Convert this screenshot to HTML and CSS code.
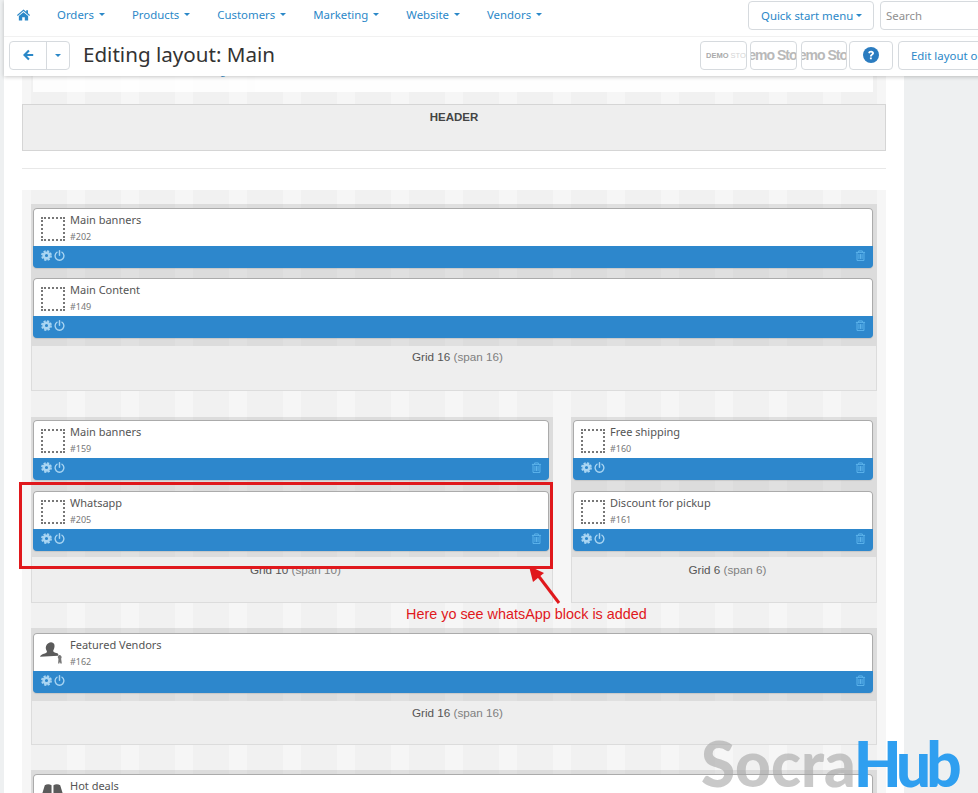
FILE: index.html
```html
<!DOCTYPE html>
<html lang="en">
<head>
<meta charset="utf-8">
<title>Editing layout: Main</title>
<link rel="stylesheet" href="styles.css">
</head>
<body>
<svg class="defs" width="0" height="0">
  <symbol id="i-gear" viewBox="0 0 12 12">
    <circle cx="6" cy="6" r="3.100" fill="none" stroke="currentColor" stroke-width="2.800"/>
    <circle cx="6" cy="6" r="5" fill="none" stroke="currentColor" stroke-width="1.800" stroke-dasharray="2.400 1.527"/>
  </symbol>
  <symbol id="i-power" viewBox="0 0 12 12">
    <path d="M3.300 2.400a4.800 4.800 0 1 0 5.400 0" fill="none" stroke="currentColor" stroke-width="1.500" stroke-linecap="round"/>
    <path d="M6 .8v5" fill="none" stroke="currentColor" stroke-width="1.600" stroke-linecap="round"/>
  </symbol>
  <symbol id="i-trash" viewBox="0 0 12 12">
    <path d="M1 2.600h10M4 2.400V1h4v1.400M2.200 2.800v8.600h7.600V2.800M4.300 4.400v5.400M6 4.400v5.400M7.700 4.400v5.400" fill="none" stroke="currentColor" stroke-width=".9"/>
  </symbol>
</svg>

<div class="page">
  <header class="topbar">
    <div class="toprow">
      <nav class="nav">
        <svg class="home" viewBox="0 0 14 12"><path d="M7 0 0 6l.8 1L7 1.800 13.200 7l.8-1-2.200-1.900V1h-1.900v1.500zM2 7.200V12h3.600V8.400h2.800V12H12V7.200L7 3z"/></svg>
        <a class="nav-item">Orders<i class="caret"></i></a>
        <a class="nav-item">Products<i class="caret"></i></a>
        <a class="nav-item">Customers<i class="caret"></i></a>
        <a class="nav-item">Marketing<i class="caret"></i></a>
        <a class="nav-item">Website<i class="caret"></i></a>
        <a class="nav-item">Vendors<i class="caret"></i></a>
      </nav>
      <a class="btn quick">Quick start menu<i class="caret"></i></a>
      <div class="search">Search</div>
    </div>
    <div class="titlerow">
      <div class="titleleft">
        <div class="backgroup">
          <a class="back"><svg viewBox="0 0 12 12"><path d="M6.200.8 1 6l5.200 5.200 1.500-1.500L5 7.100h6.200V4.900H5l2.700-2.600z"/></svg></a>
          <a class="backcaret"><i class="caret"></i></a>
        </div>
        <h1 class="title">Editing layout: Main</h1>
      </div>
      <div class="tools">
        <a class="tool tool-a"><b>DEMO</b>&nbsp;STORE</a>
        <a class="tool tool-b">Demo Store</a>
        <a class="tool tool-c">Demo Store</a>
        <a class="tool tool-help"><svg viewBox="0 0 16 16"><circle cx="8" cy="8" r="8"/><path class="qm" d="M5.200 6.100C5.400 4.500 6.500 3.700 8.100 3.700c1.700 0 2.900 1 2.900 2.400 0 1.100-.6 1.700-1.400 2.200-.6.4-.8.6-.8 1.200H7c0-1.200.4-1.700 1.100-2.200.6-.4.9-.7.9-1.100 0-.5-.4-.8-1-.8-.7 0-1 .3-1.100 1zM6.900 10.400h1.900v1.900H6.900z"/></svg></a>
        <a class="btn edit">Edit layout on site</a>
      </div>
    </div>
  </header>

  <main class="content">
    <section class="stripes topstrip">
      <div class="toppanel"><span class="peek">g</span></div>
    </section>
    <div class="header-box">HEADER</div>
    <hr class="rule">

    <section class="stripes layout">
      <div class="grid">
        <div class="block span16">
          <div class="widgets">
            <article class="card"><div class="card-head"><span class="dots"></span><div><div class="name">Main banners</div><div class="id">#202</div></div></div><div class="card-bar"><svg class="ic gear"><use href="#i-gear"/></svg><svg class="ic power"><use href="#i-power"/></svg><svg class="ic trash"><use href="#i-trash"/></svg></div></article>
            <article class="card"><div class="card-head"><span class="dots"></span><div><div class="name">Main Content</div><div class="id">#149</div></div></div><div class="card-bar"><svg class="ic gear"><use href="#i-gear"/></svg><svg class="ic power"><use href="#i-power"/></svg><svg class="ic trash"><use href="#i-trash"/></svg></div></article>
          </div>
          <div class="label">Grid 16 <span>(span 16)</span></div>
        </div>

        <div class="block span10">
          <div class="widgets">
            <article class="card"><div class="card-head"><span class="dots"></span><div><div class="name">Main banners</div><div class="id">#159</div></div></div><div class="card-bar"><svg class="ic gear"><use href="#i-gear"/></svg><svg class="ic power"><use href="#i-power"/></svg><svg class="ic trash"><use href="#i-trash"/></svg></div></article>
            <article class="card"><div class="card-head"><span class="dots"></span><div><div class="name">Whatsapp</div><div class="id">#205</div></div></div><div class="card-bar"><svg class="ic gear"><use href="#i-gear"/></svg><svg class="ic power"><use href="#i-power"/></svg><svg class="ic trash"><use href="#i-trash"/></svg></div></article>
          </div>
          <div class="label">Grid 10 <span>(span 10)</span></div>
        </div>

        <div class="block span6">
          <div class="widgets">
            <article class="card"><div class="card-head"><span class="dots"></span><div><div class="name">Free shipping</div><div class="id">#160</div></div></div><div class="card-bar"><svg class="ic gear"><use href="#i-gear"/></svg><svg class="ic power"><use href="#i-power"/></svg><svg class="ic trash"><use href="#i-trash"/></svg></div></article>
            <article class="card"><div class="card-head"><span class="dots"></span><div><div class="name">Discount for pickup</div><div class="id">#161</div></div></div><div class="card-bar"><svg class="ic gear"><use href="#i-gear"/></svg><svg class="ic power"><use href="#i-power"/></svg><svg class="ic trash"><use href="#i-trash"/></svg></div></article>
          </div>
          <div class="label">Grid 6 <span>(span 6)</span></div>
        </div>

        <div class="block span16 single">
          <div class="widgets">
            <article class="card"><div class="card-head"><svg class="blockicon" viewBox="0 0 26 24"><path d="M9 1.500c2.200-1.500 5.400-.8 6 2 .4 2-.2 4-1 5.500-.5 1-.3 1.800.8 2.300 1.500.6 3 .8 4.200 1.700v1.800L0 16c.4-1.500 2-2.500 4-3.200 1.500-.5 3-.8 3.200-1.800.2-.8-.6-1.600-1-2.800-.6-2.300 0-5.200 2.800-6.700z"/><path class="key" d="M20 14a2.500 2.500 0 0 1 2 4l.7 5h-1.500l-.5-2-.6 2h-1.300l.4-5a2.500 2.500 0 0 1 .8-4z"/></svg><div><div class="name">Featured Vendors</div><div class="id">#162</div></div></div><div class="card-bar"><svg class="ic gear"><use href="#i-gear"/></svg><svg class="ic power"><use href="#i-power"/></svg><svg class="ic trash"><use href="#i-trash"/></svg></div></article>
          </div>
          <div class="label">Grid 16 <span>(span 16)</span></div>
        </div>

        <div class="block span16 last">
          <div class="widgets">
            <article class="card"><div class="card-head"><svg class="blockicon" viewBox="0 0 26 24"><path d="M5 3c2-1.500 5-1.500 7 0v18c-2-1-6-1-10 0L0 19zM21 3c-2-1.500-5-1.500-7 0v18c2-1 6-1 10 0l2-2z"/></svg><div><div class="name">Hot deals</div><div class="id">#163</div></div></div></article>
          </div>
        </div>
      </div>
    </section>
  </main>

  <div class="mark-box"></div>
  <svg class="mark-arrow" viewBox="0 0 40 44"><path d="M33 38 11 9" fill="none" stroke="#e0181c" stroke-width="3"/><path d="M3 1 18 8 7 17z" fill="#e0181c"/></svg>
  <div class="mark-text">Here yo see whatsApp block is added</div>
  <div class="watermark">Socra<span>Hub</span></div>
</div>
</body>
</html>
```

FILE: styles.css
```css
* { box-sizing: border-box; }

html, body {
  margin: 0;
  height: 793px;
  overflow: hidden;
  background: #eef0f1;
  font-family: "Liberation Sans", Arial, sans-serif;
}

.defs { position: absolute; }

.page {
  position: relative;
  width: 978px;
  height: 793px;
  overflow: hidden;
}

/* top bar */
.topbar {
  position: absolute;
  top: 0;
  left: 4px;
  right: -200px;
  height: 76px;
  background: #fff;
  box-shadow: 0 1px 4px rgba(0, 0, 0, .22);
  z-index: 5;
  font-family: "Noto Sans", sans-serif;
  font-size: 11.400px;
  color: #2b88c8;
}

.toprow {
  display: flex;
  align-items: flex-start;
  height: 37px;
  border-bottom: 1px solid #f1f1f1;
  padding-top: 1px;
}

.nav {
  flex: 0 0 744px;
  display: flex;
  align-items: center;
  height: 27px;
  padding-left: 13px;
  gap: 27px;
}

.home { width: 13px; height: 12px; fill: #2b88c8; }

.nav-item { display: inline-flex; align-items: center; white-space: nowrap; }

.caret {
  display: inline-block;
  width: 0;
  height: 0;
  margin-left: 5px;
  border-left: 3.500px solid transparent;
  border-right: 3.500px solid transparent;
  border-top: 3.500px solid currentColor;
}

.btn {
  display: flex;
  align-items: center;
  border: 1px solid #d6dade;
  border-radius: 4px;
  background: #fff;
  white-space: nowrap;
}

.quick { width: 126px; height: 29px; padding-left: 12px; }
.quick .caret { margin-left: 3px; }

.search {
  margin-left: 6px;
  width: 200px;
  height: 29px;
  border: 1px solid #d6dade;
  border-radius: 4px;
  padding: 6px 0 0 5px;
  color: #8f8f8f;
}

.titlerow {
  display: flex;
  align-items: center;
  height: 39px;
  padding-bottom: 3px;
}

.titleleft {
  flex: 0 0 696px;
  display: flex;
  align-items: center;
  padding-left: 5px;
}

.backgroup {
  display: flex;
  width: 61px;
  height: 29px;
  border: 1px solid #d6dade;
  border-radius: 4px;
}

.back {
  width: 37px;
  display: flex;
  align-items: center;
  justify-content: center;
  border-right: 1px solid #d6dade;
}

.back svg { width: 12px; height: 12px; fill: #2b88c8; }

.backcaret { flex: 1; display: flex; align-items: center; justify-content: center; }
.backcaret .caret { margin: 0; }

.title {
  margin: -2px 0 0 13px;
  font-family: "Noto Sans", sans-serif;
  font-size: 20.600px;
  font-weight: 400;
  color: #333;
  white-space: nowrap;
}

.tools { display: flex; align-items: center; }

.tool {
  display: flex;
  align-items: center;
  justify-content: center;
  height: 29px;
  border: 1px solid #d6dade;
  border-radius: 4px;
  overflow: hidden;
  white-space: nowrap;
  font-family: "Liberation Sans", sans-serif;
  color: #b9b9b9;
}

.tool-a { width: 47px; font-size: 7.500px; justify-content: flex-start; padding-left: 5px; color: #d4d4d4; }
.tool-a b { color: #aaa; }
.tool-b { width: 47px; margin-left: 3px; font-size: 14px; font-weight: 700; letter-spacing: -1px; }
.tool-c { width: 46px; margin-left: 4px; font-size: 14px; font-weight: 700; letter-spacing: -1px; }
.tool-help { width: 44px; margin-left: 2px; }
.tool-help svg { width: 16px; height: 16px; fill: #2b7cc0; }
.tool-help .qm { fill: #fff; }

.edit { margin-left: 5px; height: 29px; padding: 0 12px; }

/* main column */
.content {
  width: 900px;
  height: 793px;
  margin-left: 4px;
  background: #fff;
  padding: 70px 18px 0;
  overflow: hidden;
}

.stripes {
  background: repeating-linear-gradient(90deg,
    #f6f6f6 0, #f6f6f6 9px,
    #f1f1f1 9px, #f1f1f1 45px,
    #f6f6f6 45px, #f6f6f6 54px);
}

.topstrip { height: 34px; padding: 0 13px 12px 11px; }

.toppanel {
  height: 22px;
  background: #fff;
  opacity: .9;
  padding-left: 187px;
  font-size: 11px;
  line-height: 11px;
  color: #2b88c8;
}

.peek { display: block; transform: translateY(-4px); }

.header-box {
  height: 47px;
  border: 1px solid #d5d5d5;
  background: #eee;
  text-align: center;
  font-size: 11.500px;
  font-weight: 700;
  color: #444;
  padding-top: 6px;
}

.rule {
  margin: 17px 0 21px;
  border: 0;
  border-top: 1px solid #e8e8e8;
}

.layout { padding: 14px 9px 0; height: 640px; }

.grid {
  display: grid;
  grid-template-columns: repeat(16, 1fr);
  column-gap: 18px;
  row-gap: 26px;
  align-items: start;
}

.span16 { grid-column: span 16; }
.span10 { grid-column: span 10; }
.span6 { grid-column: span 6; }
.single, .last { margin-top: -1px; }

.widgets {
  display: flex;
  flex-direction: column;
  gap: 10px;
  padding: 4px 4px 8px 2px;
  background: rgba(0, 0, 0, .085);
}

.span10 .widgets, .span6 .widgets { padding-top: 3px; padding-bottom: 6px; gap: 11px; }
.single .widgets { padding-top: 5px; }

.card {
  border-radius: 4px;
  box-shadow: 0 0 0 1px #ababab inset, 0 1px 1px rgba(0, 0, 0, .1);
  background: #fff;
  overflow: hidden;
}

.card-head {
  display: flex;
  gap: 5px;
  height: 38px;
  padding: 4px 0 0 7px;
  font-family: "Noto Sans", sans-serif;
}

.dots {
  flex: none;
  width: 24px;
  height: 24px;
  margin: 5px 0 0 1px;
  border: 2px dotted #777;
}

.blockicon { flex: none; width: 25px; height: 24px; margin: 4px 0 0 0; fill: #5b5b5b; }
.blockicon .key { fill: #777; }

.name { font-size: 11px; line-height: 15px; color: #555; }
.id { font-size: 9px; line-height: 12px; margin-top: 4px; color: #777; }

.card-bar {
  display: flex;
  align-items: center;
  height: 22px;
  padding: 0 7px 4px 8px;
  background: #2d87cc;
}

.ic { width: 11px; height: 11px; }
.gear { color: #a9d5f2; }
.power { color: #a9d5f2; margin-left: 2px; }
.trash { color: #66bcf2; margin-left: auto; }

.label {
  height: 45px;
  padding: 4px 0 0 7px;
  text-align: center;
  font-size: 11.700px;
  color: #555;
  background: #eee;
  border: 1px solid #dcdcdc;
  border-top: 0;
}

.label span { color: #808080; }

.span10 .label, .span6 .label { height: 46px; padding-top: 6px; }
.single .label { height: 44px; padding-top: 5px; }

/* annotation over the layout */
.mark-box {
  position: absolute;
  left: 19px;
  top: 482px;
  width: 534px;
  height: 87px;
  border: 3px solid #e0181c;
  z-index: 3;
}

.mark-arrow {
  position: absolute;
  left: 526px;
  top: 565px;
  width: 40px;
  height: 44px;
  z-index: 3;
}

.mark-text {
  position: absolute;
  left: 406px;
  top: 606px;
  font-size: 14.400px;
  color: #e0181c;
  z-index: 3;
}

.watermark {
  position: absolute;
  left: 701px;
  top: 725px;
  font-family: Lato, sans-serif;
  font-size: 62px;
  font-weight: 900;
  line-height: 76px;
  color: rgba(165, 165, 165, .6);
  z-index: 6;
  white-space: nowrap;
}

.watermark span { color: #2f9ff0; letter-spacing: -5px; margin-left: -2px; }
```
